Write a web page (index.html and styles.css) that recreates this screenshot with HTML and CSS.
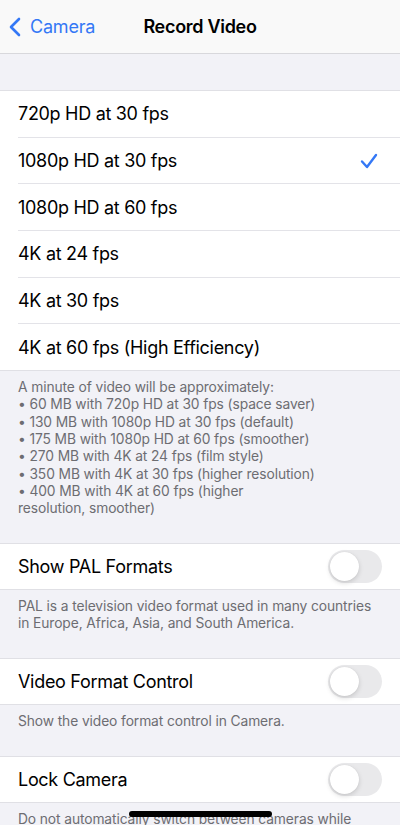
FILE: index.html
```html
<!DOCTYPE html>
<html lang="en">
<head>
    <meta charset="UTF-8">
    <meta name="viewport" content="width=device-width, initial-scale=1.0">
    <title>Record Video</title>
    <link rel="stylesheet" href="styles.css">
</head>
<body>
    <header class="nav-bar">
        <a class="back-link" href="#">
            <svg class="chevron" width="14" height="20" viewBox="0 0 14 20">
                <path d="M11 2 L3 10 L11 18" fill="none" stroke="#3478f6" stroke-width="2.6" stroke-linecap="round" stroke-linejoin="round"/>
            </svg>
            <span>Camera</span>
        </a>
        <h1 class="nav-title">Record Video</h1>
    </header>

    <main class="content">
        <div class="top-gap"></div>

        <ul class="group">
            <li class="row">720p HD at 30 fps</li>
            <li class="row selected">1080p HD at 30 fps
                <svg class="check" width="18" height="16" viewBox="0 0 18 16">
                    <path d="M2 8.5 L7 14 L16 2" fill="none" stroke="#3478f6" stroke-width="2.4" stroke-linecap="round" stroke-linejoin="round"/>
                </svg>
            </li>
            <li class="row">1080p HD at 60 fps</li>
            <li class="row">4K at 24 fps</li>
            <li class="row">4K at 30 fps</li>
            <li class="row">4K at 60 fps (High Efficiency)</li>
        </ul>
        <p class="footnote">
            A minute of video will be approximately:<br>
            • 60 MB with 720p HD at 30 fps (space saver)<br>
            • 130 MB with 1080p HD at 30 fps (default)<br>
            • 175 MB with 1080p HD at 60 fps (smoother)<br>
            • 270 MB with 4K at 24 fps (film style)<br>
            • 350 MB with 4K at 30 fps (higher resolution)<br>
            • 400 MB with 4K at 60 fps (higher<br>resolution, smoother)
        </p>

        <ul class="group">
            <li class="row">Show PAL Formats <span class="switch"></span></li>
        </ul>
        <p class="footnote">PAL is a television video format used in many countries in Europe, Africa, Asia, and South America.</p>

        <ul class="group">
            <li class="row">Video Format Control <span class="switch"></span></li>
        </ul>
        <p class="footnote">Show the video format control in Camera.</p>

        <ul class="group">
            <li class="row">Lock Camera <span class="switch"></span></li>
        </ul>
        <p class="footnote">Do not automatically switch between cameras while recording video.</p>
    </main>

    <div class="home-indicator"></div>
</body>
</html>
```

FILE: styles.css
```css
body {
    margin: 0;
    width: 400px;
    height: 825px;
    overflow: hidden;
    background-color: #f2f2f7;
    font-family: Inter, "Noto Sans", sans-serif;
    color: #000;
}

.nav-bar {
    height: 53px;
    background-color: #f9f9f9;
    border-bottom: 1px solid #d8d8dc;
    display: flex;
    align-items: center;
    justify-content: center;
    position: relative;
}

.back-link {
    position: absolute;
    left: 8px;
    top: 0;
    bottom: 0;
    display: flex;
    align-items: center;
    gap: 8px;
    color: #3478f6;
    text-decoration: none;
    font-size: 18px;
    letter-spacing: -0.2px;
}

.nav-title {
    margin: 0;
    font-size: 18px;
    font-weight: 600;
    letter-spacing: -0.3px;
}

.top-gap {
    height: 36px;
}

.group {
    list-style: none;
    margin: 0;
    padding: 0 0 0 18px;
    background: #fff;
    border-top: 1px solid #e0e0e5;
    border-bottom: 1px solid #e0e0e5;
}

.row {
    height: 45.7px;
    display: flex;
    align-items: center;
    justify-content: space-between;
    padding-right: 18px;
    border-bottom: 1px solid #e3e3e8;
    font-size: 18px;
    letter-spacing: -0.3px;
}

.row:last-child {
    border-bottom: none;
}

.check {
    margin-right: 4px;
}

.switch {
    width: 54px;
    height: 33px;
    border-radius: 17px;
    background-color: #e9e9eb;
    position: relative;
}

.switch::after {
    content: "";
    position: absolute;
    left: 2px;
    top: 2px;
    width: 29px;
    height: 29px;
    border-radius: 50%;
    background: #fff;
    box-shadow: 0 2px 5px rgba(0, 0, 0, 0.15), 0 0 1px rgba(0, 0, 0, 0.1);
}

.footnote {
    margin: 0;
    padding: 8px 18px 25px;
    font-size: 13.8px;
    line-height: 17.3px;
    color: #6d6d72;
    letter-spacing: -0.1px;
}

.home-indicator {
    position: fixed;
    left: 129px;
    bottom: 8px;
    width: 143px;
    height: 6px;
    border-radius: 3px;
    background: #000;
}
```
